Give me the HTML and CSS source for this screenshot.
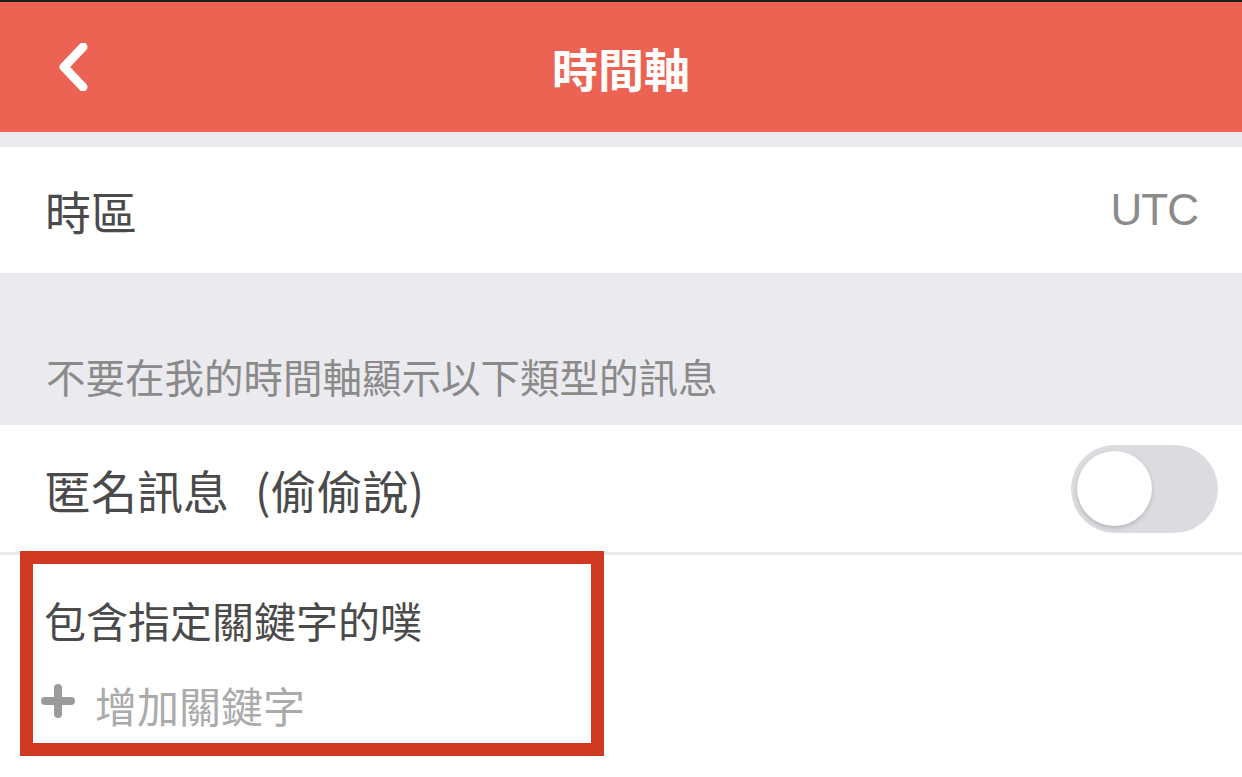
FILE: index.html
```html
<!DOCTYPE html>
<html lang="zh-Hant">

<head>
    <meta charset="UTF-8">
    <meta name="viewport" content="width=device-width, initial-scale=1.0">
    <title>時間軸</title>
    <link rel="stylesheet" href="styles.css">
</head>

<body>
    <header class="topbar">
        <a class="back" href="#">
            <svg viewBox="0 0 30 48" width="30" height="48">
                <polyline points="25,4 6,24 25,44" fill="none" stroke="#fff" stroke-width="9"
                    stroke-linecap="round" stroke-linejoin="round" />
            </svg>
        </a>
        <h1>時間軸</h1>
        <span></span>
    </header>

    <div class="spacer"></div>

    <div class="row">
        <span class="label">時區</span>
        <span class="value">UTC</span>
    </div>

    <div class="section-head">
        <p>不要在我的時間軸顯示以下類型的訊息</p>
    </div>

    <div class="row row-toggle">
        <span class="label">匿名訊息<span class="aside">(偷偷說)</span></span>
        <span class="switch"><span class="knob"></span></span>
    </div>

    <div class="keywords">
        <div class="highlight">
            <p class="kw-title">包含指定關鍵字的噗</p>
            <a class="kw-add" href="#">
                <svg viewBox="0 0 34 34" width="34" height="34">
                    <path d="M17 4 V30 M4 17 H30" stroke="#9b9b9b" stroke-width="8" stroke-linecap="round" />
                </svg>
                <span>增加關鍵字</span>
            </a>
        </div>
    </div>
</body>

</html>
```

FILE: styles.css
```css
/* Base */
* {
    margin: 0;
    padding: 0;
    box-sizing: border-box;
}

body {
    width: 1242px;
    height: 777px;
    overflow: hidden;
    background-color: #fff;
    font-family: "Noto Sans CJK TC", "Liberation Sans", sans-serif;
    color: #4a4a4a;
}

a {
    text-decoration: none;
}

/* Header */
.topbar {
    display: grid;
    grid-template-columns: 1fr auto 1fr;
    align-items: center;
    height: 132px;
    border-top: 2px solid #1d1d1d;
    background-color: #ec6354;
}

.back {
    display: flex;
    padding-left: 58px;
}

.topbar h1 {
    color: #fff;
    font-size: 46px;
    font-weight: 700;
    line-height: 1;
}

.spacer {
    height: 15px;
    background-color: #ebeaef;
}

/* Rows */
.row {
    display: flex;
    align-items: center;
    justify-content: space-between;
    height: 126px;
    padding: 0 44px 0 45px;
    background-color: #fff;
}

.label {
    font-size: 46px;
    line-height: 1;
}

.aside {
    margin-left: 26px;
}

.value {
    font-family: "Liberation Sans", sans-serif;
    font-size: 44px;
    letter-spacing: -1px;
    color: #8b8b8b;
}

.section-head {
    display: flex;
    align-items: flex-end;
    height: 152px;
    padding: 0 0 30px 46px;
    background-color: #ebeaef;
}

.section-head p {
    font-size: 39.5px;
    line-height: 1;
    color: #8a8a8a;
}

.row-toggle {
    height: 130px;
    padding-right: 24px;
    border-bottom: 3px solid #ebebef;
}

/* Toggle switch */
.switch {
    display: flex;
    align-items: center;
    width: 147px;
    height: 88px;
    padding: 0 6px;
    border-radius: 44px;
    background-color: #dcdbe0;
}

.knob {
    width: 75px;
    height: 75px;
    border-radius: 50%;
    background-color: #fff;
    box-shadow: 0 2px 4px rgba(0, 0, 0, 0.18);
}

/* Keyword filter */
.keywords {
    height: 222px;
}

.highlight {
    position: relative;
    width: 584px;
    height: 205px;
    margin: -4px 0 0 20px;
    padding: 35px 0 0 11px;
    border: 13px solid #d03a22;
    background-color: #fff;
}

.kw-title {
    font-size: 42px;
    line-height: 1;
    color: #4a4a4a;
}

.kw-add {
    display: flex;
    align-items: center;
    gap: 20px;
    margin-top: 43px;
    margin-left: -3px;
    font-size: 42px;
    line-height: 1;
    color: #ababab;
}

.kw-add svg {
    flex-shrink: 0;
    margin-top: -8px;
}
```
